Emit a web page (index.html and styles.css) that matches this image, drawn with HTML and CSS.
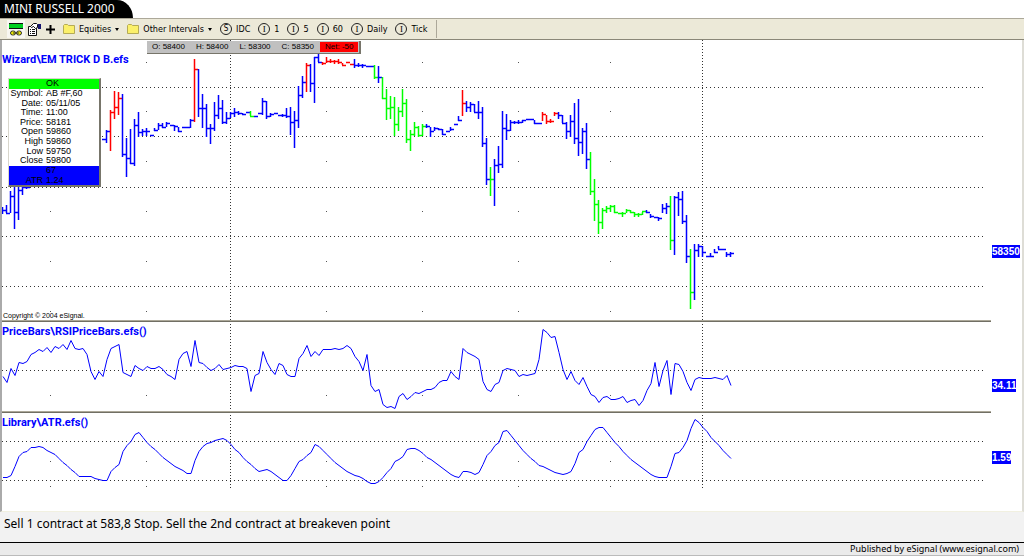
FILE: index.html
```html
<!DOCTYPE html>
<html lang="en">
<head>
  <meta charset="UTF-8">
  <title>Mini Russell 2000</title>
  <link rel="stylesheet" href="styles.css">
</head>
<body>

<h1 class="title">MINI RUSSELL 2000</h1>

<div class="toolbar">
  <button class="tool tool-active" aria-label="Link">
    <svg width="14" height="13" viewBox="0 0 14 13">
      <rect x="0" y="0" width="14" height="6" fill="#111"/>
      <rect x="0" y="1" width="14" height="4" fill="#00d020"/>
      <rect x="1.500" y="8" width="5" height="4" rx="2" fill="#e8e800" stroke="#333"/>
      <rect x="7.500" y="8" width="5" height="4" rx="2" fill="#e8e800" stroke="#333"/>
      <path d="M4 10h6" stroke="#333"/>
    </svg>
  </button>
  <button class="tool" aria-label="Properties">
    <svg width="14" height="13" viewBox="0 0 14 13">
      <path d="M1.500 3.500h8v9h-8z" fill="#fff" stroke="#111"/>
      <path d="M3 6.500h1M5 6.500h3M3 8.500h1M5 8.500h3M3 10.500h1M5 10.500h3" stroke="#111"/>
      <path d="M3.500 3.500l3-3h3l1 1v3l-2 1-2-2-2 1z" fill="#fff" stroke="#111"/>
      <path d="M11 1h3v5h-3z" fill="#15156e"/>
    </svg>
  </button>
  <button class="tool" aria-label="Add">
    <svg width="9" height="9" viewBox="0 0 9 9"><path d="M4.500 0v9M0 4.500h9" stroke="#000" stroke-width="2"/></svg>
  </button>
  <button class="tool menu">
    <svg width="12" height="10" viewBox="0 0 12 10"><path d="M.5 9.500v-8l1-1h3l1 1h6v8z" fill="#fbf06a" stroke="#b5ab55"/></svg>
    Equities
    <i class="arrow"></i>
  </button>
  <button class="tool menu">
    <svg width="12" height="10" viewBox="0 0 12 10"><path d="M.5 9.500v-8l1-1h3l1 1h6v8z" fill="#fbf06a" stroke="#b5ab55"/></svg>
    Other Intervals
    <i class="arrow"></i>
  </button>
  <button class="tool"><span class="ring">S</span>IDC</button>
  <button class="tool"><span class="ring serif">I</span>1</button>
  <button class="tool"><span class="ring serif">I</span>5</button>
  <button class="tool"><span class="ring serif">I</span>60</button>
  <button class="tool"><span class="ring serif">I</span>Daily</button>
  <button class="tool"><span class="ring serif">I</span>Tick</button>
  <span class="divider"></span>
</div>

<div class="charts">
  <div class="panel panel-price">
    <svg id="price"></svg>
    <div class="axis"><span class="tag">58350</span></div>
    <h2 class="study">Wizard\EM TRICK D B.efs</h2>
    <div class="copyright">Copyright © 2004 eSignal.</div>

    <div class="quote">
      <span>O: 58400</span>
      <span>H: 58400</span>
      <span>L: 58300</span>
      <span>C: 58350</span>
      <span class="net">Net: -50</span>
    </div>

    <table class="cursor">
      <tr class="ok"><th colspan="2">OK</th></tr>
      <tr><th>Symbol:</th><td>AB #F,60</td></tr>
      <tr><th>Date:</th><td>05/11/05</td></tr>
      <tr><th>Time:</th><td>11:00</td></tr>
      <tr><th>Price:</th><td>58181</td></tr>
      <tr><th>Open</th><td>59860</td></tr>
      <tr><th>High</th><td>59860</td></tr>
      <tr><th>Low</th><td>59750</td></tr>
      <tr><th>Close</th><td>59800</td></tr>
      <tr class="values"><th></th><td>67</td></tr>
      <tr class="values"><th>ATR</th><td>1.24</td></tr>
    </table>
  </div>

  <div class="panel panel-rsi">
    <svg id="rsi"></svg>
    <div class="axis"><span class="tag">34.11</span></div>
    <h2 class="study">PriceBars\RSIPriceBars.efs()</h2>
  </div>

  <div class="panel panel-atr">
    <svg id="atr"></svg>
    <div class="axis"><span class="tag">1.59</span></div>
    <h2 class="study">Library\ATR.efs()</h2>
  </div>
</div>

<p class="note">Sell 1 contract at 583,8 Stop. Sell the 2nd contract at breakeven point</p>
<div class="footer">Published by eSignal (www.esignal.com)</div>

<script src="chart.js"></script>
</body>
</html>
```
FILE: styles.css
```css
body {
  margin: 0;
  font-family: 'Noto Sans', Tahoma, sans-serif;
  background-color: #fff;
  color: #000;
}

.title {
  width: max-content;
  margin: 0;
  padding: 0 18px 0 4px;
  border-top-right-radius: 16px 18px;
  background-color: #000;
  color: #fff;
  font-size: 12px;
  font-weight: normal;
  line-height: 18px;
}

/* toolbar */
.toolbar {
  display: flex;
  align-items: center;
  box-sizing: border-box;
  height: 22px;
  padding-left: 7px;
  border-top: 1px solid #aca899;
  border-bottom: 1px solid #8a8778;
  background-color: #ece9d8;
}

.tool {
  display: flex;
  align-items: center;
  gap: 4px;
  height: 18px;
  margin-right: 8px;
  padding: 0;
  border: none;
  background: none;
  color: #000;
  font-family: 'DejaVu Sans Condensed', 'DejaVu Sans', Tahoma, sans-serif;
  font-size: 9px;
  white-space: nowrap;
}
.tool:nth-child(-n+2) {
  margin-right: 2px;
}
.tool-active {
  padding: 0 2px;
  background-color: #f8f7f1;
}
.tool:nth-child(2) {
  margin-right: 5px;
}

.arrow {
  border: 2px solid transparent;
  border-top: 3px solid #000;
  border-bottom: none;
}

.ring {
  width: 10px;
  height: 10px;
  border: 1px solid #222;
  border-radius: 50%;
  font-size: 8px;
  line-height: 10px;
  text-align: center;
}
.serif {
  font-family: 'Liberation Serif', serif;
  font-size: 9px;
}

.divider {
  height: 18px;
  border-left: 1px solid #aca899;
}

/* charts */
.charts {
  border-left: 2px solid #aaa;
  border-right: 2px solid #deddd6;
  border-bottom: 1px solid #f1f0e0;
}

.panel {
  position: relative;
  display: grid;
  grid-template-columns: 1fr 31px;
}

.panel svg {
  display: block;
  box-sizing: border-box;
  width: 100%;
  border-bottom: 1px solid #716f64;
  box-shadow: inset 0 -1px #aca899;
}
.panel-price svg {
  height: 282px;
}
.panel-rsi svg {
  height: 91px;
}
.panel-atr svg {
  height: 98px;
  border-bottom: none;
  box-shadow: none;
}

.grid {
  fill: none;
  stroke: #333;
  stroke-width: 1px;
  stroke-dasharray: 1 3;
  shape-rendering: crispEdges;
}
.session {
  stroke-dasharray: 1 2;
}
.dots {
  fill: #555;
}
.bar {
  fill: none;
  stroke-width: 1.5px;
}
.line {
  fill: none;
  stroke: #00f;
  stroke-width: 1px;
}
.b {
  stroke: #00f;
}
.r {
  stroke: #f00;
}
.g {
  stroke: #0f0;
}

.study {
  position: absolute;
  top: 4px;
  left: 0;
  margin: 0;
  color: #00f;
  font-family: Roboto, Arial, sans-serif;
  font-size: 11px;
  line-height: 12px;
}
.panel-price .study {
  top: 14px;
}

.axis {
  padding-left: 1px;
}
.panel-price .axis {
  padding-top: 205px;
}
.panel-rsi .axis {
  padding-top: 57px;
}
.panel-atr .axis {
  padding-top: 38px;
}
.tag {
  display: block;
  width: max-content;
  background-color: #00f;
  color: #fff;
  font-family: 'Liberation Sans', Arial, sans-serif;
  font-size: 10px;
  font-weight: bold;
  line-height: 13px;
}

.copyright {
  position: absolute;
  bottom: 1px;
  left: 1px;
  font-family: 'Liberation Sans', Arial, sans-serif;
  font-size: 7px;
  line-height: 10px;
}

.quote {
  position: absolute;
  top: 1px;
  left: 145px;
  display: flex;
  gap: 11px;
  padding: 1px 1px 1px 5px;
  border-right: 2px solid #77756a;
  border-bottom: 1px solid #77756a;
  background-color: #c0c0c0;
  font-family: 'Liberation Sans', Arial, sans-serif;
  font-size: 8px;
  line-height: 10px;
}
.net {
  margin-left: -5px;
  padding: 0 5px;
  background-color: #f00;
}

.cursor {
  position: absolute;
  top: 38px;
  left: 6px;
  width: 93px;
  height: 109px;
  border: 1px solid #d8d6cc;
  border-right: 2px solid #77756a;
  border-bottom: 2px solid #77756a;
  border-collapse: separate;
  border-spacing: 0;
  background-color: #fff;
  font-family: 'Liberation Sans', Arial, sans-serif;
  font-size: 9px;
  line-height: 9px;
}
.cursor th,
.cursor td {
  padding: 0;
  font-weight: normal;
}
.cursor th {
  width: 34px;
  padding-right: 3px;
  text-align: right;
}
.cursor .ok th {
  background-color: #0f0;
  text-align: center;
}
.values {
  background-color: #00f;
}

/* bottom */
.note {
  margin: 0;
  padding: 3px 4px 10px;
  border-bottom: 1px solid #000;
  background-color: #f2f2f2;
  font-size: 12px;
  line-height: 17px;
}

.footer {
  padding-right: 5px;
  border-bottom: 1px solid #bbb;
  background-color: #ebebeb;
  font-size: 9px;
  line-height: 12px;
  text-align: right;
}
```
FILE: chart.js
```js
const STEP = 4;
const LEFT = 2;   // width of the border left of the charts

// bars: [high, low, close, colour] for every 4px
const early = [
  [207,214,210],[205,213,213],[191,213,196],[187,229,212],[187,220,190],[186,195,187],[186,189,187]
];
const bars = [
  [139,139,139],[130,143,131],[110,151,112,'r'],[91,119,107,'r'],[92,115,98,'r'],[94,157,154],
  [138,177,158],[129,164,163],[119,166,125],[112,137,132],[129,136,131],[128,136,131],[135,135,135],
  [128,131,130],[123,130,125],[123,128,127],[122,127,123],[125,125,125],[125,131,126],[127,132,131],
  [127,127,127],[127,127,127],[119,128,120],[59,122,69,'r'],[69,117,108],[94,128,108],[104,137,128],
  [124,144,128],[102,131,115],[95,119,108],[100,124,122],[112,124,118],[112,118,113],[108,117,112],
  [111,115,113],[113,114,114],[112,112,112],[111,116,116,'g'],[116,116,116],[113,113,113],[98,115,101],
  [101,119,116],[113,117,114],[113,113,113],[115,115,115],[114,117,115],[108,118,116],[107,135,122],
  [111,148,120],[86,128,95],[76,98,82],[63,92,65,'r'],[64,92,83],[57,103,57],[53,62,62],
  [62,65,63,'r'],[57,63,61,'r'],[59,63,61,'r'],[60,64,61,'r'],[59,64,62,'r'],[63,65,65,'r'],
  [62,62,62,'r'],[64,64,64,'r'],[59,68,65],[63,67,65],[64,68,65],[66,66,66],[66,66,66],
  [65,79,77,'g'],[66,83,77],[77,99,98,'g'],[89,120,108,'g'],[96,119,107,'g'],[97,136,124,'g'],
  [107,131,111,'g'],[89,117,103,'g'],[99,143,139,'g'],[130,151,134,'g'],[122,136,127,'g'],
  [126,137,135,'g'],[124,136,126,'g'],[124,128,126],[127,137,131],[127,131,128],[128,130,129],
  [129,135,134],[131,131,131],[127,131,129],[124,124,124],[116,121,120],[90,116,103,'r'],
  [101,112,107],[102,112,104],[104,112,112],[101,119,112],[107,147,143],[138,185,179],
  [167,196,179,'g'],[159,206,165],[146,173,164],[111,168,128],[114,140,130],[120,131,122],
  [121,124,122],[120,124,122],[120,123,120],[119,119,119],[119,119,119],[120,124,123],[123,123,123],
  [112,121,114,'r'],[115,124,121,'r'],[119,123,121,'r'],[112,116,113,'r'],[112,119,115],
  [115,123,123],[122,139,131],[115,137,121],[103,144,138],[99,156,142],[128,154,131],[123,169,159],
  [152,195,191,'g'],[179,221,204,'g'],[200,234,222,'g'],[208,229,210,'g'],[206,213,208,'g'],
  [205,212,206,'g'],[205,213,212,'g'],[213,213,213,'g'],[212,217,213,'g'],[209,213,210,'g'],
  [210,213,212,'g'],[212,217,214,'g'],[213,217,214,'g'],[212,215,211,'g'],[210,213,212],
  [214,218,216],[217,217,217],[217,221,218],[204,213,208],[203,214,206],[196,250,240,'g'],
  [196,255,197],[192,216,199],[191,224,221],[215,263,256],[249,309,292,'g'],[244,300,250],
  [244,257,246],[246,257,252],[256,256,256],[253,257,256],[249,253,252],[246,249,249],
  [249,249,249],[252,257,254],[252,257,253]
];

const rsi = [
  376,382,368,375,362,363,361,354,352,349,351,347,352,346,348,344,349,340,348,349,348,354,371,379,
  371,376,359,348,346,344,372,374,376,365,368,370,366,368,368,366,369,374,376,379,359,353,351,366,
  340,362,363,367,370,368,364,369,368,367,365,366,366,368,391,375,373,351,362,369,374,363,365,374,
  376,376,358,353,345,356,351,355,349,349,349,348,349,348,345,348,356,361,370,354,385,391,389,404,
  407,406,408,396,393,399,396,392,393,391,389,389,387,382,380,380,371,376,379,348,352,354,356,359,
  381,389,391,384,382,370,368,369,370,376,374,375,374,373,359,329,332,337,336,352,369,379,371,380,
  384,377,386,394,396,402,397,396,399,399,398,396,402,400,399,405,400,390,383,362,386,370,360,394,
  363,364,371,382,390,379,377,378,378,378,377,378,379,375,385
];

const atr = [
  477,477,475,466,456,452,451,447,447,446,447,450,452,454,458,462,465,469,472,476,476,476,476,478,
  479,480,480,471,467,464,451,445,441,434,432,437,442,446,449,453,457,460,463,466,468,470,473,473,
  460,451,446,443,442,440,439,438,440,444,449,452,457,461,464,468,471,470,469,471,474,477,480,480,
  475,468,461,459,455,452,444,446,450,454,458,462,465,468,471,473,475,476,478,481,483,483,481,477,
  472,468,461,459,456,449,448,448,450,453,457,459,462,465,468,471,474,476,477,471,471,472,474,472,
  464,455,451,445,442,431,430,435,440,445,450,454,458,461,465,466,468,470,472,473,474,473,471,463,
  452,449,441,435,429,427,427,432,437,442,446,451,455,459,462,465,468,471,474,476,477,477,477,466,
  453,452,447,440,428,419,422,427,431,437,441,445,450,454,458
];

function gridMarkup(rows, dotRows, top, bottom) {
  let out = '';
  rows.forEach(y => {
    out += `<path class="grid" d="M2 ${y}.5H984"/>`;
  });
  [230, 702].forEach(x => {
    out += `<path class="grid session" d="M${x}.5 ${top}V${bottom}"/>`;
  });
  dotRows.forEach(y => {
    [50, 146, 326, 422, 518, 610].forEach(x => {
      out += `<rect class="dots" x="${x}" y="${y}" width="1" height="1"/>`;
    });
  });
  return out;
}

function barMarkup(list, startX) {
  return list.map(([high, low, close, colour], i) => {
    const x = startX + i * STEP;
    let d = `M${x} ${close}.5h4`;
    if (low > high) d += `M${x}.5 ${high}V${low}`;
    return `<path class="bar ${colour || 'b'}" d="${d}"/>`;
  }).join('');
}

function lineMarkup(values) {
  const points = values.map((y, i) => `${3 + i * STEP},${y}.5`).join(' ');
  return `<polyline class="line" points="${points}"/>`;
}

function draw(id, top, markup) {
  document.getElementById(id).innerHTML = `<g transform="translate(${-LEFT} ${-top})">${markup}</g>`;
}

draw('price', 40, gridMarkup([87, 136, 187, 236, 286], [62, 111, 161, 211, 261, 311], 40, 320) +
  barMarkup(early, 2) + barMarkup(bars, 102));
draw('rsi', 322, gridMarkup([370], [395], 324, 410) + lineMarkup(rsi));
draw('atr', 413, gridMarkup([441, 480], [461, 486], 415, 488) + lineMarkup(atr));
```
